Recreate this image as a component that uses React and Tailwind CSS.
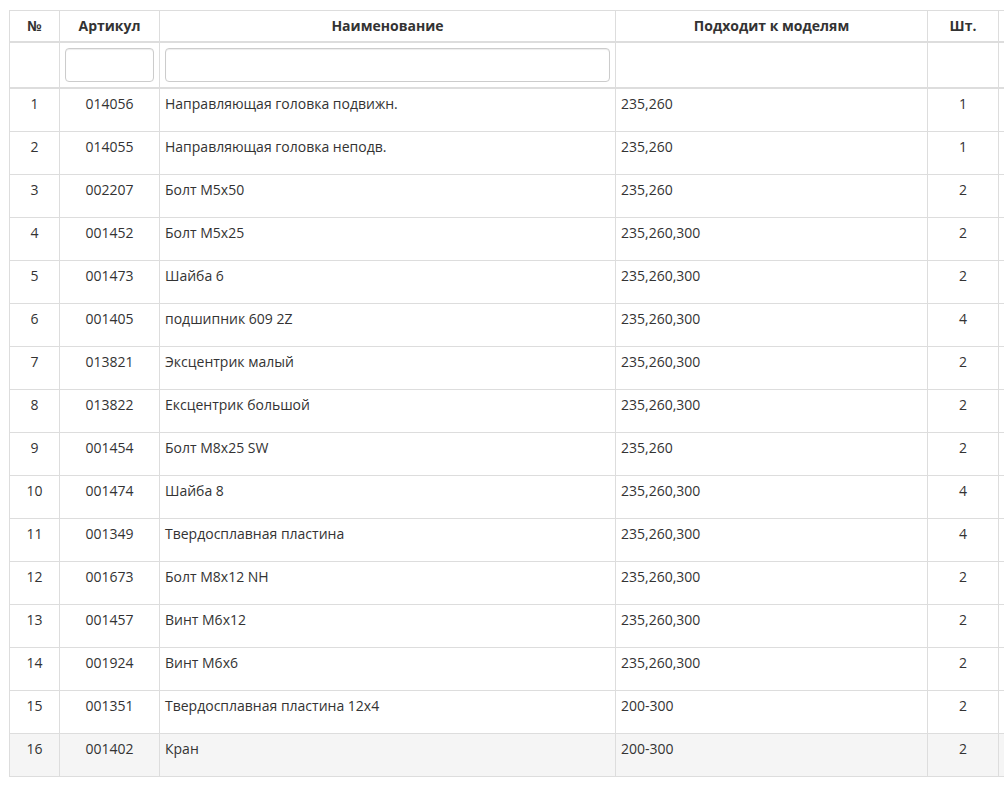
import React from 'react';

const parts = [
  ['1', '014056', 'Направляющая головка подвижн.', '235,260', '1'],
  ['2', '014055', 'Направляющая головка неподв.', '235,260', '1'],
  ['3', '002207', 'Болт M5x50', '235,260', '2'],
  ['4', '001452', 'Болт M5x25', '235,260,300', '2'],
  ['5', '001473', 'Шайба 6', '235,260,300', '2'],
  ['6', '001405', 'подшипник 609 2Z', '235,260,300', '4'],
  ['7', '013821', 'Эксцентрик малый', '235,260,300', '2'],
  ['8', '013822', 'Ексцентрик большой', '235,260,300', '2'],
  ['9', '001454', 'Болт M8x25 SW', '235,260', '2'],
  ['10', '001474', 'Шайба 8', '235,260,300', '4'],
  ['11', '001349', 'Твердосплавная пластина', '235,260,300', '4'],
  ['12', '001673', 'Болт M8x12 NH', '235,260,300', '2'],
  ['13', '001457', 'Винт M6x12', '235,260,300', '2'],
  ['14', '001924', 'Винт M6x6', '235,260,300', '2'],
  ['15', '001351', 'Твердосплавная пластина 12x4', '200-300', '2'],
  ['16', '001402', 'Кран', '200-300', '2'],
];

const th = 'border border-[#ddd] border-b-2 px-[5px] py-[5px] text-center font-bold leading-[20px]';
const td = 'border border-[#ddd] px-[5px] pt-[5px] pb-[17px] align-top leading-[20px]';
const inputCls =
  'block w-full h-[34px] px-3 border border-[#ccc] rounded-[4px] bg-white shadow-[inset_0_1px_1px_rgba(0,0,0,0.075)] outline-none';

export default function App() {
  return (
    <div
      className="w-[1004px] h-[790px] overflow-hidden bg-white pt-[10px] pl-[9px] text-[14px] text-[#333]"
      style={{ fontFamily: '"Open Sans", "Liberation Sans", sans-serif' }}
    >
      <table className="table-fixed border-collapse w-[1101px]">
        <colgroup>
          <col className="w-[50px]" />
          <col className="w-[100px]" />
          <col className="w-[456px]" />
          <col className="w-[312px]" />
          <col className="w-[71px]" />
          <col className="w-[112px]" />
        </colgroup>
        <thead>
          <tr>
            <th className={th}>№</th>
            <th className={th}>Артикул</th>
            <th className={th}>Наименование</th>
            <th className={th}>Подходит к моделям</th>
            <th className={th}>Шт.</th>
            <th className={th}></th>
          </tr>
          <tr>
            <th className="border border-[#ddd] border-b-2 p-[5px]"></th>
            <th className="border border-[#ddd] border-b-2 p-[5px]">
              <input type="text" className={inputCls} />
            </th>
            <th className="border border-[#ddd] border-b-2 p-[5px]">
              <input type="text" className={inputCls} />
            </th>
            <th className="border border-[#ddd] border-b-2 p-[5px]"></th>
            <th className="border border-[#ddd] border-b-2 p-[5px]"></th>
            <th className="border border-[#ddd] border-b-2 p-[5px]"></th>
          </tr>
        </thead>
        <tbody>
          {parts.map((row, i) => (
            <tr key={row[0]} className={i === parts.length - 1 ? 'bg-[#f5f5f5]' : ''}>
              <td className={td + ' text-center'}>{row[0]}</td>
              <td className={td + ' text-center'}>{row[1]}</td>
              <td className={td}>{row[2]}</td>
              <td className={td}>{row[3]}</td>
              <td className={td + ' text-center'}>{row[4]}</td>
              <td className={td}></td>
            </tr>
          ))}
        </tbody>
      </table>
    </div>
  );
}
